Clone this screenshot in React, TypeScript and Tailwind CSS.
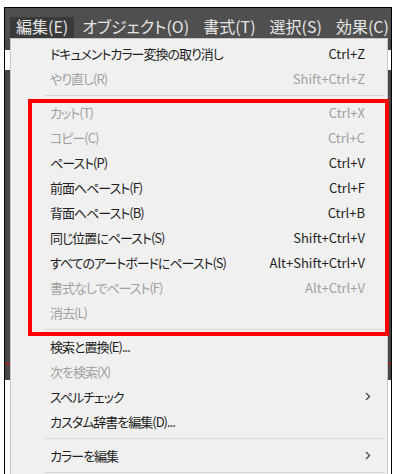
type Item = { label: string; shortcut?: string; disabled?: boolean; submenu?: boolean } | 'sep';

const topMenu = ['編集(E)', 'オブジェクト(O)', '書式(T)', '選択(S)', '効果(C)'];

const items: Item[] = [
	{ label: 'ドキュメントカラー変換の取り消し', shortcut: 'Ctrl+Z' },
	{ label: 'やり直し(R)', shortcut: 'Shift+Ctrl+Z', disabled: true },
	'sep',
	{ label: 'カット(T)', shortcut: 'Ctrl+X', disabled: true },
	{ label: 'コピー(C)', shortcut: 'Ctrl+C', disabled: true },
	{ label: 'ペースト(P)', shortcut: 'Ctrl+V' },
	{ label: '前面へペースト(F)', shortcut: 'Ctrl+F' },
	{ label: '背面へペースト(B)', shortcut: 'Ctrl+B' },
	{ label: '同じ位置にペースト(S)', shortcut: 'Shift+Ctrl+V' },
	{ label: 'すべてのアートボードにペースト(S)', shortcut: 'Alt+Shift+Ctrl+V' },
	{ label: '書式なしでペースト(F)', shortcut: 'Alt+Ctrl+V', disabled: true },
	{ label: '消去(L)', disabled: true },
	'sep',
	{ label: '検索と置換(E)...' },
	{ label: '次を検索(X)', disabled: true },
	{ label: 'スペルチェック', submenu: true },
	{ label: 'カスタム辞書を編集(D)...' },
	'sep',
	{ label: 'カラーを編集', submenu: true },
	'sep',
];

function Chevron() {
	return (
		<svg className="w-[6px] h-[9px]" viewBox="0 0 6 9" fill="none" stroke="#4a4a4a" strokeWidth={1.4}>
			<path d="M1 1l3.5 3.5L1 8" />
		</svg>
	);
}

export default function App() {
	return (
		<div className="relative w-[396px] h-[474px] overflow-hidden bg-white pt-[7px] px-[4px] font-['Noto_Sans_CJK_JP',sans-serif] [font-feature-settings:'palt']">
			{/* window frame */}
			<div className="h-full border-l border-t border-r border-black flex flex-col">
				<div className="h-[30px] shrink-0 bg-[#4f4f4f] flex items-end pl-[5px] gap-[2px]">
					{topMenu.map((m, i) => (
						<div
							key={m}
							className={`h-[21px] px-[6px] flex items-center whitespace-nowrap text-[16px] leading-none text-[#e6e6e6] pb-[3px] ${
								i === 0 ? 'bg-[#3a3a3a]' : ''
							}`}
						>
							{m}
						</div>
					))}
				</div>
				<div className="h-[12px] bg-[#484848]" />
				<div className="h-[20px] bg-white" />
				<div className="h-[293px] bg-[#464646]" />
				<div className="h-px bg-[#e00000]" />
				<div className="h-[16px] bg-[#464646]" />
				<div className="flex-1 bg-white" />
			</div>

			{/* dropdown */}
			<div className="absolute left-[10px] top-[38px] w-[378px] h-[450px] bg-[#f0f0f0] border border-[#c8c8c8] pt-[2px]">
				{items.map((it, i) =>
					it === 'sep' ? (
						<div key={i} className="h-[9px] flex items-center pl-[34px] pr-[2px]">
							<div className="h-px w-full bg-[#d6d6d6]" />
						</div>
					) : (
						<div
							key={i}
							className={`h-[25px] flex items-center pl-[39px] pr-[22px] text-[13px] leading-none ${
								it.disabled ? 'text-[#a0a0a0]' : 'text-[#1e1e1e]'
							}`}
						>
							<span className="flex-1 tracking-[-1px]">{it.label}</span>
							{it.shortcut && <span>{it.shortcut}</span>}
							{it.submenu && (
								<span className="-mr-[6px]">
									<Chevron />
								</span>
							)}
						</div>
					)
				)}

				{/* red highlight annotation */}
				<div className="absolute left-[17px] top-[60px] w-[361px] h-[237px] border-[4px] border-[#ff0000]" />
			</div>
		</div>
	);
}
